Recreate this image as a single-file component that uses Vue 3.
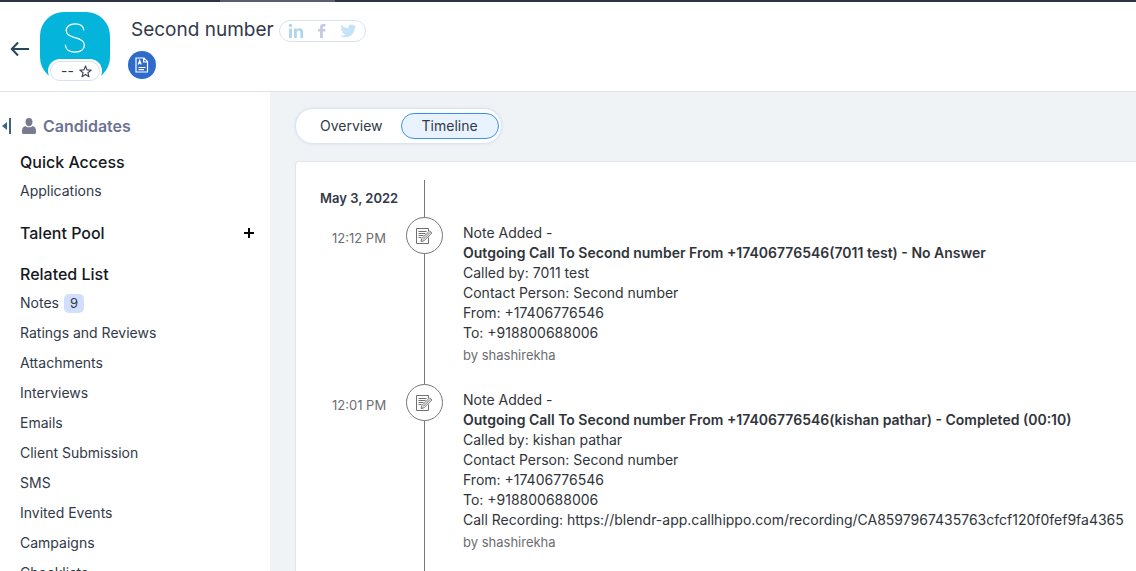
<script setup>
const related = [
  { name: 'Notes', count: 9 },
  { name: 'Ratings and Reviews' },
  { name: 'Attachments' },
  { name: 'Interviews' },
  { name: 'Emails' },
  { name: 'Client Submission' },
  { name: 'SMS' },
  { name: 'Invited Events' },
  { name: 'Campaigns' },
  { name: 'Checklists' },
]

const events = [
  {
    time: '12:12 PM',
    title: 'Outgoing Call To Second number From +17406776546(7011 test) - No Answer',
    lines: [
      'Called by: 7011 test',
      'Contact Person: Second number',
      'From: +17406776546',
      'To: +918800688006',
    ],
    by: 'by shashirekha',
  },
  {
    time: '12:01 PM',
    title: 'Outgoing Call To Second number From +17406776546(kishan pathar) - Completed (00:10)',
    lines: [
      'Called by: kishan pathar',
      'Contact Person: Second number',
      'From: +17406776546',
      'To: +918800688006',
      'Call Recording: https://blendr-app.callhippo.com/recording/CA8597967435763cfcf120f0fef9fa4365',
    ],
    by: 'by shashirekha',
  },
]
</script>

<template>
  <div class="page">
    <div class="strip"><span class="strip-tab"></span></div>

    <header class="header">
      <button class="plain back" aria-label="Back">
        <svg width="20" height="16" viewBox="0 0 20 16" fill="none" stroke="#26465c" stroke-width="2">
          <path d="M19 8H2M8 1.5L1.8 8L8 14.5" />
        </svg>
      </button>

      <div class="avatar">
        <svg class="avatar-letter" width="22" height="32" viewBox="0 0 22 32" fill="none" stroke="#fff" stroke-width="1.3">
          <path d="M19.8 8.4C19.6 4.2 16 1.8 11 1.8C5.800 1.800 2.200 4.600 2.200 8.600C2.200 12.600 5.200 14.300 10.800 15.600C17 17 20.400 18.800 20.400 23C20.400 27.400 16.600 30.200 11.200 30.200C5.400 30.200 1.500 27.400 1.300 22.800" />
        </svg>
        <button class="rating" aria-label="Rating">
          <span>--</span>
          <svg width="13" height="13" viewBox="0 0 13 13" fill="none" stroke="#3b4058" stroke-width="1.1" stroke-linejoin="round">
            <path d="M6.500 1L8 4.900L12.200 5.100L8.900 7.700L10 11.800L6.500 9.500L3 11.800L4.100 7.700L.8 5.100L5 4.900Z" />
          </svg>
        </button>
      </div>

      <div class="identity">
        <div class="name-row">
          <h1>Second number</h1>
          <div class="social">
            <a href="#" aria-label="LinkedIn">
              <svg width="16" height="16" viewBox="0 0 16 16" fill="#b0d5e8">
                <circle cx="2.500" cy="2.500" r="1.700" />
                <path d="M1.100 5.500H3.900V15H1.100ZM6 5.500H8.700V6.800C9.300 5.800 10.300 5.200 11.600 5.200C14.300 5.200 15.200 7 15.200 9.400V15H12.400V10C12.400 8.700 12.200 7.600 10.700 7.600C9.200 7.600 8.800 8.800 8.800 10V15H6Z" />
              </svg>
            </a>
            <a href="#" aria-label="Facebook">
              <svg width="8" height="16" viewBox="0 0 8 16" fill="#c4cbe0">
                <path d="M2 15V8.600H0V6H2V4.300C2 2 3.300 1 5.200 1H7.600V3.400H6.100C5 3.400 4.800 3.900 4.800 4.700V6H7.600L7.200 8.600H4.800V15Z" />
              </svg>
            </a>
            <a href="#" aria-label="Twitter">
              <svg width="17" height="16" viewBox="0 0 17 16" fill="#c4e3f8">
                <path d="M16.500 3.200C15.900 3.500 15.300 3.600 14.700 3.700C15.300 3.300 15.800 2.700 16.100 1.900C15.500 2.300 14.800 2.500 14 2.700C12.800 1.400 11 1.200 9.700 2.100C8.600 2.800 8.100 4 8.400 5.300C5.600 5.200 3.100 3.900 1.500 1.800C.7 3.300 1 5.100 2.500 6.200C2 6.200 1.500 6 1 5.800C1 7.300 2.100 8.700 3.700 9C3.200 9.200 2.700 9.200 2.200 9.100C2.600 10.400 3.800 11.300 5.300 11.400C3.900 12.400 2.300 12.900.5 12.700C2 13.700 3.700 14.200 5.500 14.200C11.400 14.200 14.900 9.300 14.700 4.800C15.400 4.400 16 3.800 16.500 3.200Z" />
              </svg>
            </a>
          </div>
        </div>
        <button class="resume" aria-label="Resume">
          <svg width="14" height="16" viewBox="0 0 14 16" fill="none" stroke="#fff" stroke-width="1.200">
            <path d="M1 1H9L12.500 4.500V15H1ZM8.600 1V5H12.500M3.500 10.500H10.500M3.500 12.700H9M3.200 7.500L4.700 3.500L6.200 7.500M3.800 6.200H5.700" />
          </svg>
        </button>
      </div>
    </header>

    <div class="body">
      <aside class="sidebar">
        <div class="module">
          <button class="plain collapse" aria-label="Collapse sidebar">
            <svg width="10" height="16" viewBox="0 0 10 16" fill="#3d6482">
              <path d="M0 8L5 4V12Z" /><path d="M7 0H9V16H7Z" />
            </svg>
          </button>
          <svg width="14" height="16" viewBox="0 0 14 16" fill="#777b91">
            <path d="M7 0C9.300 0 10.500 1.700 10.500 3.800C10.500 6.200 9.200 8.300 7 8.300S3.500 6.200 3.500 3.800C3.500 1.700 4.700 0 7 0Z" />
            <path d="M3.200 8C4.800 9.700 9.200 9.700 10.800 8C13 8.600 14 10.600 14 13V14.500Q14 16 12.500 16H1.500Q0 16 0 14.500V13C0 10.600 1 8.600 3.200 8Z" />
          </svg>
          <span class="module-name">Candidates</span>
        </div>

        <nav class="menu">
          <h2>Quick Access</h2>
          <a href="#">Applications</a>

          <div class="pool">
            <h2>Talent Pool</h2>
            <button class="plain" aria-label="Add to talent pool">
              <svg width="10" height="10" viewBox="0 0 10 10" fill="#000"><path d="M4 0H6V4H10V6H6V10H4V6H0V4H4Z" /></svg>
            </button>
          </div>

          <h2>Related List</h2>
          <a v-for="r in related" :key="r.name" href="#">
            {{ r.name }}<span v-if="r.count" class="count">{{ r.count }}</span>
          </a>
        </nav>
      </aside>

      <main class="main">
        <div class="tabs">
          <button class="tab">Overview</button>
          <button class="tab active">Timeline</button>
        </div>

        <section class="card">
          <div class="row date-row">
            <div class="date">May 3, 2022</div>
            <div class="rail"></div>
          </div>
          <article v-for="e in events" :key="e.time" class="row">
            <time class="time">{{ e.time }}</time>
            <div class="rail">
              <span class="node">
                <svg width="17" height="17" viewBox="0 -1 17 17" fill="none" stroke="#707070">
                  <path d="M12.500 3V.5H.5V15.500H12.500V9.500M2.500 3.500H10.500M2.500 5.500H9.500M2.500 7.500H7.500M2.500 9.500H5.500" />
                  <path d="M5 13.500L5.800 10.600L13.600 2.800L15.800 5L8 12.800ZM7 11.600L14.300 4.300" />
                </svg>
              </span>
            </div>
            <div class="detail">
              <div>Note Added -</div>
              <div class="title">{{ e.title }}</div>
              <div v-for="l in e.lines" :key="l">{{ l }}</div>
              <div class="by">{{ e.by }}</div>
            </div>
          </article>
        </section>
      </main>
    </div>
  </div>
</template>

<style>
body {
  margin: 0;
}
</style>

<style scoped>
* {
  box-sizing: border-box;
}
.page {
  display: flex;
  flex-direction: column;
  height: 100vh;
  overflow: hidden;
  background: #fff;
  color: #313949;
  font: 14px/20px Inter, "Liberation Sans", sans-serif;
}
button {
  font: inherit;
  color: inherit;
  cursor: pointer;
}
a {
  color: inherit;
  text-decoration: none;
}
svg {
  display: block;
  flex: none;
}
.plain {
  padding: 0;
  border: 0;
  background: none;
}
.strip {
  flex: none;
  height: 2px;
  padding-left: 220px;
  background: #2b3445;
}
.strip-tab {
  display: block;
  width: 115px;
  height: 2px;
  background: #5b5d70;
}
.header {
  flex: none;
  display: flex;
  height: 90px;
  padding: 10px;
  border-bottom: 1px solid #dfe4ee;
}
.back {
  margin-right: 10px;
  padding-top: 4px;
}
.avatar {
  display: flex;
  flex-direction: column;
  align-items: center;
  justify-content: space-between;
  width: 70px;
  height: 69px;
  padding-top: 10px;
  border-radius: 24px;
  background: #04b4da;
}
.rating {
  display: flex;
  align-items: center;
  gap: 5px;
  height: 20px;
  padding: 0 7px 0 10px;
  border: 1px solid #dbe1f0;
  border-radius: 10px;
  background: #fff;
  box-shadow: 0 0 0 2px #fff;
}
.identity {
  margin-left: 18px;
}
.name-row {
  display: flex;
  align-items: center;
  gap: 5px;
  height: 36px;
  padding-left: 3px;
}
h1 {
  margin: 0;
  font-size: 19px;
  line-height: 28px;
  font-weight: 400;
}
.social {
  display: flex;
  align-items: center;
  gap: 14px;
  height: 22px;
  margin-top: 2px;
  padding: 0 8px;
  border: 1px solid #dbe3f0;
  border-radius: 11px;
}
.resume {
  display: flex;
  align-items: center;
  justify-content: center;
  width: 28px;
  height: 28px;
  margin-top: 3px;
  padding: 0;
  border: 0;
  border-radius: 50%;
  background: #2f6bcb;
}
.body {
  flex: 1;
  display: flex;
  min-height: 0;
}
.sidebar {
  flex: none;
  width: 270px;
  padding-top: 22px;
}
.module {
  display: flex;
  align-items: center;
  height: 24px;
  padding-left: 2px;
}
.collapse {
  margin-right: 10px;
}
.module-name {
  margin-left: 7px;
  color: #6c7393;
  font-size: 16px;
  font-weight: 600;
}
.menu {
  padding: 12px 16px 0 20px;
}
h2 {
  margin: 0;
  padding: 2px 0;
  color: #15181e;
  font-size: 16px;
  line-height: 20px;
  font-weight: 500;
}
.menu a {
  display: flex;
  align-items: center;
  height: 30px;
}
.menu > h2 + a {
  margin-top: 2px;
}
.pool {
  display: flex;
  align-items: center;
  justify-content: space-between;
  margin: 15px 0 17px;
}
.count {
  margin-left: 5px;
  padding: 0 6px;
  border-radius: 5px;
  background: #d1dffd;
  font-size: 13px;
  line-height: 19px;
}
.main {
  flex: 1;
  min-width: 0;
  padding: 16px 0 0 25px;
  background: #eff3f6;
}
.tabs {
  display: flex;
  align-items: center;
  gap: 6px;
  width: fit-content;
  height: 36px;
  padding: 0 2px 0 12px;
  border: 1px solid #dde5f1;
  border-radius: 18px;
  background: #fff;
  box-shadow: 0 0 3px #d4dfee;
}
.tab {
  height: 26px;
  padding: 0 11px;
  border: 1px solid transparent;
  border-radius: 13px;
  background: none;
}
.active {
  padding: 0 20px;
  border-color: #3b91ef;
  background: #e9f3ff;
}
.card {
  min-height: 100%;
  margin-top: 17px;
  padding: 18px 0 0 24px;
  border: 1px solid #dfe6ef;
  border-right: 0;
  border-radius: 4px 0 0 0;
  background: #fff;
}
.row {
  display: grid;
  grid-template-columns: 86px 37px 1fr;
}
.date-row {
  height: 37px;
}
.date {
  padding-top: 8px;
  font-size: 13px;
  font-weight: 600;
}
.time {
  padding: 11px 0 0 12px;
  color: #6b6d72;
  font-size: 13px;
}
.rail {
  background: linear-gradient(#777, #777) center / 1px 100% no-repeat;
}
.node {
  display: flex;
  align-items: center;
  justify-content: center;
  width: 37px;
  height: 37px;
  border: 1px solid #777;
  border-radius: 50%;
  background: #fff;
}
.detail {
  padding: 6px 0 19px 20px;
  color: #30343a;
  white-space: nowrap;
}
.title {
  font-weight: 600;
}
.by {
  padding-top: 2px;
  color: #6b6d72;
  font-size: 13px;
}
</style>
